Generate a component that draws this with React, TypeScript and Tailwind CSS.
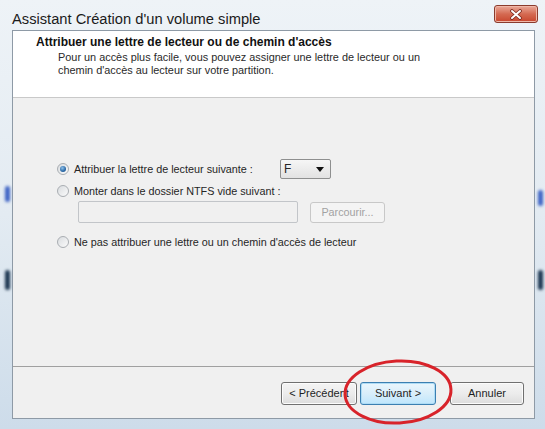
import React from "react";

const Radio = ({ checked }: { checked?: boolean }) => (
    <span className="relative w-[12px] h-[12px] shrink-0 rounded-full border border-[#a9adb2] bg-gradient-to-br from-[#d9dcdf] to-[#fbfbfb] flex items-center justify-center">
        {checked && (
            <span className="w-[6px] h-[6px] rounded-full bg-[radial-gradient(circle_at_40%_35%,#8fc2ea,#2a68a6_60%,#1d4e82)]" />
        )}
    </span>
);

const VistaButton = ({ label, primary, className = "" }: { label: string; primary?: boolean; className?: string }) => (
    <div
        className={`h-[23px] flex items-center justify-center rounded-[3px] border text-[11px] text-[#1e1e1e] whitespace-nowrap overflow-hidden ${
            primary
                ? "border-[#3c7fb1] bg-gradient-to-b from-[#eaf6fd] via-[#d9eefa] to-[#bee6fd] shadow-[inset_0_0_0_1px_#aedcf5]"
                : "border-[#707070] bg-gradient-to-b from-[#f4f4f4] via-[#ececec] to-[#dcdcdc] shadow-[inset_0_0_0_1px_#fcfcfc]"
        } ${className}`}
    >
        {label}
    </div>
);

export default function App() {
    return (
        <div className="relative w-[545px] h-[429px] overflow-hidden flex flex-col bg-gradient-to-b from-[#eef3f7] via-[#e3ebf2] to-[#cddcea] font-['Liberation_Sans',Arial,sans-serif]">
            {/* glass blobs on the frame */}
            <div className="absolute left-[5px] top-[186px] w-[5px] h-[16px] rounded-full bg-[#3d63c4] blur-[1.5px]" />
            <div className="absolute left-[5px] top-[270px] w-[5px] h-[20px] rounded-full bg-[#1b3550] blur-[1.5px]" />
            <div className="absolute right-[2px] top-[190px] w-[5px] h-[16px] rounded-full bg-[#3d63c4] blur-[1.5px]" />
            <div className="absolute right-[2px] top-[270px] w-[5px] h-[20px] rounded-full bg-[#1b3550] blur-[1.5px]" />

            {/* Title bar */}
            <div className="h-[30px] shrink-0 flex items-start justify-between pl-[12px] pr-[7px]">
                <span className="mt-[11px] text-[14.7px] leading-[17px] text-[#1b1b1b]">Assistant Création d'un volume simple</span>
                <div className="mt-[5px] w-[44px] h-[18px] rounded-[3px] border border-[#8a3b2d] bg-gradient-to-b from-[#e9a999] via-[#d46a52] to-[#c8452c] shadow-[inset_0_0_0_1px_#f0b8a8] flex items-center justify-center">
                    <svg width="14" height="11" viewBox="0 0 14 11">
                        <path d="M3 2 L11 9 M11 2 L3 9" stroke="#7a2a20" strokeWidth="3.6" strokeLinecap="round" />
                        <path d="M3 2 L11 9 M11 2 L3 9" stroke="#ffffff" strokeWidth="2" strokeLinecap="round" />
                    </svg>
                </div>
            </div>

            {/* Client area */}
            <div className="flex-1 flex flex-col ml-[12px] mr-[10px] mb-[10px] border border-[#8e9aa6] bg-[#f0f0f0]">
                {/* Header */}
                <div className="h-[67px] shrink-0 bg-white border-b border-[#c9c9c9] pt-[4px] pl-[23px]">
                    <div className="text-[12px] leading-[15px] font-bold text-[#111]">
                        Attribuer une lettre de lecteur ou de chemin d'accès
                    </div>
                    <div className="pl-[22px] mt-[1px] text-[10.9px] leading-[13px] text-[#2a2a2a]">
                        <div>Pour un accès plus facile, vous pouvez assigner une lettre de lecteur ou un</div>
                        <div>chemin d'accès au lecteur sur votre partition.</div>
                    </div>
                </div>

                {/* Body */}
                <div className="flex-1 pl-[44px] pt-[61px] text-[10.8px] text-[#262626]">
                    <div className="flex items-center h-[20px] gap-[5px]">
                        <Radio checked />
                        <span className="w-[201px]">Attribuer la lettre de lecteur suivante :</span>
                        <div className="w-[51px] h-[20px] flex items-center justify-between rounded-[2px] border border-[#8e8f8f] bg-gradient-to-b from-[#f6f6f6] to-[#e2e2e2] pl-[3px] pr-[6px]">
                            <span className="text-[12px]">F</span>
                            <svg width="8" height="5" viewBox="0 0 8 5">
                                <path d="M0 0 H8 L4 5 Z" fill="#111" />
                            </svg>
                        </div>
                    </div>
                    <div className="flex items-center h-[14px] mt-[5px] gap-[5px]">
                        <Radio />
                        <span>Monter dans le dossier NTFS vide suivant :</span>
                    </div>
                    <div className="flex items-center mt-[3px] pl-[21px] gap-[12px]">
                        <div className="w-[220px] h-[22px] rounded-[2px] border border-[#c2c5c9] bg-[#f0f0f0]" />
                        <div className="w-[75px] h-[21px] rounded-[3px] border border-[#c8c8c8] bg-[#f4f4f4] flex items-center justify-center text-[#a2a2a2]">
                            Parcourir...
                        </div>
                    </div>
                    <div className="flex items-center h-[14px] mt-[12px] gap-[5px]">
                        <Radio />
                        <span>Ne pas attribuer une lettre ou un chemin d'accès de lecteur</span>
                    </div>
                </div>

                {/* Footer */}
                <div className="h-[52px] shrink-0 border-t border-[#a0a0a0] flex items-start justify-end pt-[15px] pr-[10px]">
                    <VistaButton label="< Précédent" className="w-[76px]" />
                    <VistaButton label="Suivant >" primary className="w-[76px] ml-[3px]" />
                    <VistaButton label="Annuler" className="w-[74px] ml-[14px]" />
                </div>
            </div>

            {/* red circle annotation */}
            <svg className="absolute left-[340px] top-[356px]" width="118" height="72" viewBox="0 0 118 72">
                <ellipse cx="58" cy="36" rx="53" ry="31" fill="none" stroke="#d8232a" strokeWidth="3" transform="rotate(-3 58 36)" />
            </svg>
        </div>
    );
}
